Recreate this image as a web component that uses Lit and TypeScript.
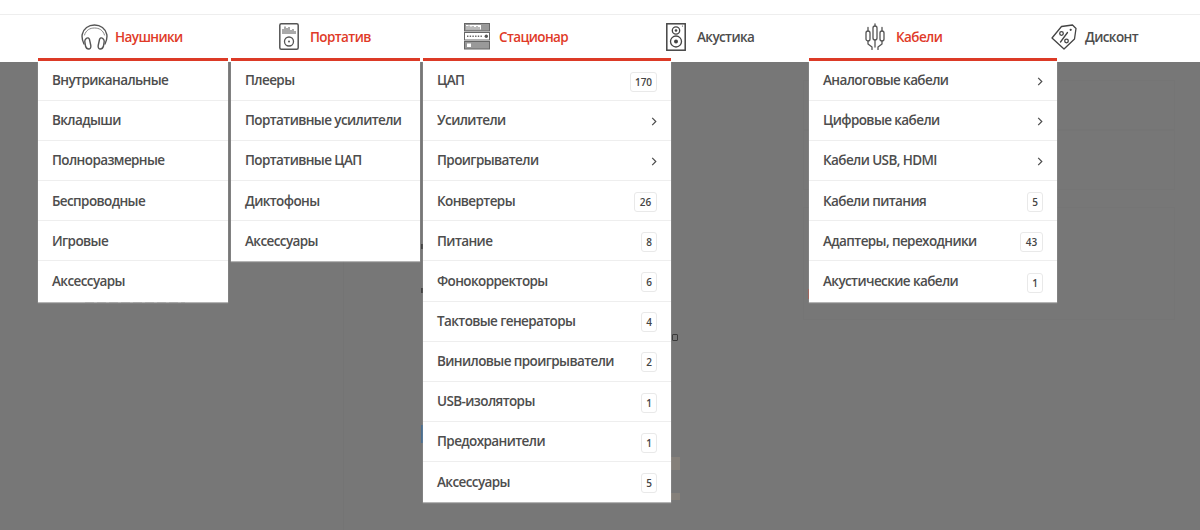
import { LitElement, html, css, svg } from "lit";
import { customElement } from "lit/decorators.js";

type Row = { label: string; count?: number; more?: boolean };
type Tab = { label: string; icon: string; width: number; gap: number; offset: number; iconGap: number; menu?: Row[] };

const plain = (items: string[]): Row[] => items.map((label) => ({ label }));
const rows = (items: [string, number | true][]): Row[] =>
  items.map(([label, v]) => (v === true ? { label, more: true } : { label, count: v }));

const TABS: Tab[] = [
  { label: "Наушники", icon: "phones", width: 190, gap: 3, offset: 43, iconGap: 7,
    menu: plain(["Внутриканальные", "Вкладыши", "Полноразмерные", "Беспроводные", "Игровые", "Аксессуары"]) },
  { label: "Портатив", icon: "player", width: 189, gap: 3, offset: 48, iconGap: 11,
    menu: plain(["Плееры", "Портативные усилители", "Портативные ЦАП", "Диктофоны", "Аксессуары"]) },
  { label: "Стационар", icon: "rack", width: 248, gap: 0, offset: 41, iconGap: 9,
    menu: rows([["ЦАП", 170], ["Усилители", true], ["Проигрыватели", true], ["Конвертеры", 26], ["Питание", 8], ["Фонокорректоры", 6], ["Тактовые генераторы", 4], ["Виниловые проигрыватели", 2], ["USB-изоляторы", 1], ["Предохранители", 1], ["Аксессуары", 5]]) },
  { label: "Акустика", icon: "speaker", width: 138, gap: 0, offset: -5, iconGap: 11 },
  { label: "Кабели", icon: "cables", width: 248, gap: 0, offset: 56, iconGap: 11,
    menu: rows([["Аналоговые кабели", true], ["Цифровые кабели", true], ["Кабели USB, HDMI", true], ["Кабели питания", 5], ["Адаптеры, переходники", 43], ["Акустические кабели", 1]]) },
  { label: "Дисконт", icon: "tag", width: 143, gap: 0, offset: -6, iconGap: 8 },
];

const ICONS: Record<string, unknown> = {
  phones: html`<svg width="27" height="26" viewBox="0 0 27 26" fill="none" stroke="#555" stroke-width="1.4" stroke-linecap="round">
    ${svg`<path d="M3 20C1 16 .8 13 1.2 10.500 2.400 4.500 7.500 1 13.500 1s11.100 3.500 12.300 9.500C26.200 13 26 16 24 20"/>
    <path d="M3.500 11C5 6 9 4 13.500 4s8.500 2 10 7" stroke="#888" stroke-width="1"/>
    <path d="M5.200 14.500C6.500 13.300 8 13.800 8.500 15.500L9.800 21.500C10.200 23.700 9 25 7.700 25 6 25 5 24 4.500 22L3.800 17.500C3.600 16.200 4.300 15.300 5.200 14.500Z"/>
    <path d="M21.800 14.500C20.500 13.300 19 13.800 18.500 15.500L17.200 21.500C16.800 23.700 18 25 19.300 25 21 25 22 24 22.500 22L23.200 17.500C23.400 16.200 22.700 15.300 21.800 14.500Z"/>`}
  </svg>`,
  player: html`<svg width="20" height="27" viewBox="0 0 20 27" fill="none" stroke="#555">
    ${svg`<rect x=".8" y=".8" width="18.400" height="25.400" rx="1.500" stroke-width="1.500"/>
    <path d="M4 11V6M6 11V3.500M8 11V5M10 11V4M12 11V7M14 11V6M16 11V8" stroke-width="1"/>
    <circle cx="10" cy="18.500" r="4.500" stroke-width="1.300"/><circle cx="10" cy="18.500" r="1" fill="#555" stroke="none"/>`}
  </svg>`,
  rack: html`<svg width="26" height="27" viewBox="0 0 26 27" fill="none" stroke="#666">
    ${svg`<rect x=".5" y=".5" width="25" height="7.500" fill="#999" stroke-width="1"/>
    <rect x="2" y="2" width="15" height="4.500" fill="#fff" stroke="none"/>
    <path d="M3 6.500V3M5 6.500V2.500M7 6.500V3.500M9 6.500V3M11 6.500V4M13 6.500V3M15 6.500V4" stroke-width=".9"/>
    <rect x=".5" y="9.500" width="25" height="7.500" fill="#fff" stroke-width="1"/>
    <path d="M3 13.200H19" stroke-width="1.400" stroke-dasharray="1.400 1.300"/><circle cx="22.300" cy="13.200" r="1.700" fill="#555" stroke="none"/>
    <rect x=".5" y="18.500" width="25" height="7.500" fill="#999" stroke-width="1"/>
    <rect x="3" y="20.500" width="4" height="3.500" fill="#fff" stroke="none"/>`}
  </svg>`,
  speaker: html`<svg width="20" height="28" viewBox="0 0 20 28" fill="none" stroke="#444">
    ${svg`<rect x=".8" y=".8" width="18.400" height="26.400" stroke-width="1.500"/>
    <circle cx="10" cy="7.500" r="3.700" stroke-width="1.300"/><circle cx="10" cy="7.500" r="1.300" fill="#444" stroke="none"/>
    <circle cx="10" cy="18.500" r="5.500" stroke-width="1.300"/><circle cx="10" cy="18.500" r="2" fill="#444" stroke="none"/>
    <circle cx="16.500" cy="3" r=".6" fill="#444" stroke="none"/>`}
  </svg>`,
  cables: html`<svg width="20" height="27" viewBox="0 0 20 27" fill="none" stroke="#555" stroke-width="1.300" stroke-linecap="round" stroke-linejoin="round">
    ${svg`<path d="M3 4.500V8M10 .8V3M17 4.500V8"/>
    <rect x="1" y="8" width="4" height="10" rx="2"/>
    <rect x="8" y="3" width="4" height="14" rx="2"/>
    <rect x="15" y="8" width="4" height="10" rx="2"/>
    <path d="M3 18V21L7 24V26.500M10 17V24M17 18V21L13 24V26.500"/>`}
  </svg>`,
  tag: html`<svg width="26" height="26" viewBox="0 0 26 26" fill="none" stroke="#444" stroke-width="1.300" stroke-linejoin="round" stroke-linecap="round">
    ${svg`<path d="M10.500 2.500L21.500 1 25 4.500 23.500 15 13 25 1 14Z"/>
    <circle cx="19.700" cy="5.800" r="1.100" fill="#444" stroke="none"/>
    <circle cx="10.500" cy="9.500" r="1.800"/><circle cx="15.500" cy="17" r="1.800"/><path d="M16.500 8.500L9.500 18"/>`}
  </svg>`,
};

const chevron = html`<svg class="chev" width="6" height="9" viewBox="0 0 6 9" fill="none" stroke="#4d4d4d" stroke-width="1.200"><path d="M1.200 .8L4.800 4.500 1.200 8.200"/></svg>`;

@customElement("app-root")
export class AppRoot extends LitElement {
  static styles = css`
    :host { display: block; width: 1200px; height: 530px; overflow: hidden; position: relative; background: #777; font-family: "Open Sans", "Noto Sans", sans-serif; }
    .top { height: 14px; background: #fff; border-bottom: 1px solid #eee; }
    nav { display: flex; height: 47px; padding-left: 38px; background: #fff; position: relative; z-index: 2; }
    .tab { position: relative; height: 47px; flex: none; }
    .head { display: flex; align-items: center; height: 43px; font-size: 13.5px; font-weight: 600; letter-spacing: -.6px; color: #4d4d4d; white-space: nowrap; }
    .head .ic { flex: none; display: flex; }
    .tab.on .head { color: #e03a28; }
    .line { height: 3px; }
    .tab.on .line { background: #dc3a26; }
    .menu { position: absolute; top: 46px; left: 0; right: 0; background: #fff; box-shadow: 0 1px 1px rgba(255,255,255,.45); }
    .row { display: flex; align-items: center; justify-content: space-between; height: 40.1px; box-sizing: border-box; padding: 0 14px .6px 14px; font-size: 13.5px; font-weight: 600; letter-spacing: -.6px; color: #4d4d4d; border-bottom: 1px solid #eee; white-space: nowrap; }
    .row:last-child { border-bottom: none; }
    .badge { width: 14px; height: 18px; margin-top: 3px; border: 1px solid #e9e9e9; border-radius: 3px; font-size: 10px; letter-spacing: 0; line-height: 18px; text-align: center; color: #444; flex: none; }
    .badge.d2 { width: 21px; }
    .badge.d3 { width: 25px; }
    .chev { flex: none; margin-top: 3px; }
    .ghost { position: absolute; }
    .ln-v { left: 343px; top: 62px; bottom: 0; width: 1px; background: #747474; }
    .box { left: 803px; width: 372px; border: 1px solid #757575; box-sizing: border-box; }
    .tan { left: 671px; width: 9px; background: #85807a; }
    .blue { left: 421px; top: 425px; width: 2px; height: 18px; background: #4d6f8e; }
    .red { left: 808px; top: 289px; width: 1px; height: 10px; background: #9a5a52; }
    .dark { left: 421px; width: 2px; height: 5px; background: #444; }
    .chip { left: 672px; top: 334px; width: 4px; height: 5px; border: 1px solid #3a3a3a; border-radius: 1px; }
    .smear { left: 85px; top: 301px; width: 100px; height: 2px; background: repeating-linear-gradient(90deg, #5e5e5e 0 9px, #777 9px 12px); }
  `;

  private renderRow(r: Row) {
    const digits = r.count !== undefined ? String(r.count).length : 0;
    return html`<div class="row">
      <span>${r.label}</span>
      ${digits ? html`<span class="badge d${digits}">${r.count}</span>` : r.more ? chevron : ""}
    </div>`;
  }

  render() {
    return html`
      <div class="ghost ln-v"></div>
      <div class="ghost box" style="top:80px;height:50px"></div>
      <div class="ghost box" style="top:130px;height:60px"></div>
      <div class="ghost box" style="top:207px;height:113px"></div>
      <div class="ghost tan" style="top:457px;height:13px"></div>
      <div class="ghost tan" style="top:493px;height:7px"></div>
      <div class="ghost blue"></div>
      <div class="ghost red"></div>
      <div class="ghost dark" style="top:244px"></div>
      <div class="ghost dark" style="top:288px"></div>
      <div class="ghost chip"></div>
      <div class="ghost smear"></div>
      <div class="top"></div>
      <nav>
        ${TABS.map((t) => html`
          <div class="tab ${t.menu ? "on" : ""}" style="width:${t.width}px;margin-right:${t.gap}px">
            <div class="head" style="margin-left:${t.offset}px;gap:${t.iconGap}px"><span class="ic">${ICONS[t.icon]}</span>${t.label}</div>
            <div class="line"></div>
            ${t.menu ? html`<div class="menu">${t.menu.map((r) => this.renderRow(r))}</div>` : ""}
          </div>`)}
      </nav>`;
  }
}
